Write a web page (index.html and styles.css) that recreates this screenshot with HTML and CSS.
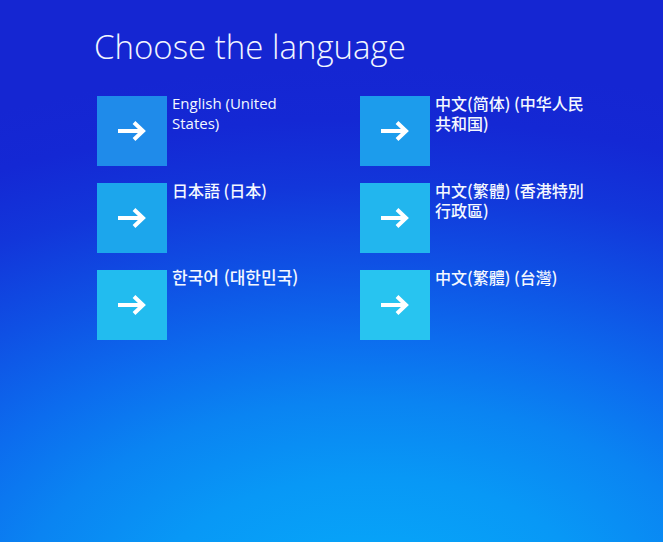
FILE: index.html
```html
<!DOCTYPE html>
<html lang="en">
<head>
<meta charset="utf-8">
<title>Choose the language</title>
<link rel="stylesheet" href="styles.css">
</head>
<body>
<main class="screen">
  <h1 class="title">Choose the language</h1>
  <ul class="langs">
    <li class="lang">
      <span class="tile tile-a"><svg class="arrow" viewBox="0 0 32 24"><path d="M2 12H27M18 3.5L27 12L18 20.5" fill="none" stroke="#fff" stroke-width="4"/></svg></span>
      <span class="name" lang="en">English (United States)</span>
    </li>
    <li class="lang">
      <span class="tile tile-b"><svg class="arrow" viewBox="0 0 32 24"><path d="M2 12H27M18 3.5L27 12L18 20.5" fill="none" stroke="#fff" stroke-width="4"/></svg></span>
      <span class="name sc" lang="zh-CN">中文(简体) (中华人民共和国)</span>
    </li>
    <li class="lang">
      <span class="tile tile-c"><svg class="arrow" viewBox="0 0 32 24"><path d="M2 12H27M18 3.5L27 12L18 20.5" fill="none" stroke="#fff" stroke-width="4"/></svg></span>
      <span class="name jp" lang="ja">日本語 (日本)</span>
    </li>
    <li class="lang">
      <span class="tile tile-d"><svg class="arrow" viewBox="0 0 32 24"><path d="M2 12H27M18 3.5L27 12L18 20.5" fill="none" stroke="#fff" stroke-width="4"/></svg></span>
      <span class="name tc" lang="zh-HK">中文(繁體) (香港特別行政區)</span>
    </li>
    <li class="lang">
      <span class="tile tile-e"><svg class="arrow" viewBox="0 0 32 24"><path d="M2 12H27M18 3.5L27 12L18 20.5" fill="none" stroke="#fff" stroke-width="4"/></svg></span>
      <span class="name kr" lang="ko">한국어 (대한민국)</span>
    </li>
    <li class="lang">
      <span class="tile tile-f"><svg class="arrow" viewBox="0 0 32 24"><path d="M2 12H27M18 3.5L27 12L18 20.5" fill="none" stroke="#fff" stroke-width="4"/></svg></span>
      <span class="name tc" lang="zh-TW">中文(繁體) (台灣)</span>
    </li>
  </ul>
</main>
</body>
</html>
```

FILE: styles.css
```css
html, body {
  margin: 0;
  padding: 0;
  height: 100%;
}

body {
  background: #1428d2;
  color: #fff;
  font-family: "Open Sans", "Noto Sans", "Noto Sans CJK SC", sans-serif;
}

.screen {
  box-sizing: border-box;
  width: 663px;
  height: 542px;
  padding: 25px 0 0 97px;
  background:
    radial-gradient(ellipse 140% 100% at 56% 112%, #06acfa 0%, #0898f6 24%, #0a84f2 38%, #0c6cee 50%, #0f50e4 64%, #1236da 78%, #1428d4 90%, #1526d2 100%);
  overflow: hidden;
}

.title {
  margin: 0 0 0 -3px;
  font-family: "Open Sans", "Noto Sans", sans-serif;
  font-weight: 300;
  font-size: 33px;
  line-height: 44px;
  color: #f2f6ff;
}

.langs {
  list-style: none;
  margin: 27px 0 0 0;
  padding: 0;
  display: grid;
  grid-template-columns: 263px 263px;
  row-gap: 17px;
}

.lang {
  display: flex;
  align-items: flex-start;
  gap: 5px;
}

.tile {
  flex: none;
  width: 70px;
  height: 70px;
  display: flex;
  align-items: center;
  justify-content: center;
}

.tile-a { background: #1f8bea; }
.tile-b { background: #1c9cec; }
.tile-c { background: #1ca6ec; }
.tile-d { background: #22b6ee; }
.tile-e { background: #22bcef; }
.tile-f { background: #28c4f0; }

.arrow {
  width: 32px;
  height: 24px;
  display: block;
}

.name {
  width: 152px;
  margin-top: -3px;
  font-size: 15px;
  line-height: 20px;
  color: #f4f8ff;
}

.sc, .tc, .jp, .kr {
  font-size: 16px;
  font-weight: 500;
}
.sc { font-family: "Noto Sans CJK SC", sans-serif; }
.tc { font-family: "Noto Sans CJK TC", sans-serif; }
.jp { font-family: "Noto Sans CJK JP", sans-serif; }
.kr { font-family: "Noto Sans CJK KR", sans-serif; font-size: 17px; }
```
